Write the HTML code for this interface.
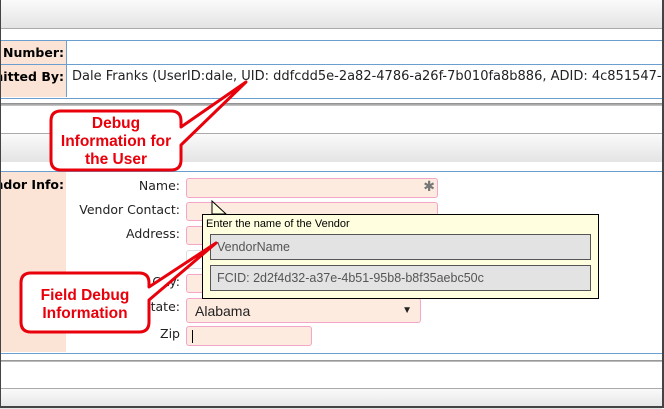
<!DOCTYPE html>
<html><head><style>
body{margin:0;width:664px;height:408px;overflow:hidden;background:#fff;font-family:"DejaVu Sans","Liberation Sans",sans-serif;position:relative}
.a{position:absolute}
.bar{background:linear-gradient(#fafafa,#e4e4e4);}
.lbl{font-size:12.5px;color:#222;text-align:right;width:180px;left:0}
.inp{background:#fdebdf;border:1px solid #f4a6c8;border-radius:3px;box-sizing:border-box}
.ar{font-family:"Liberation Sans",Arial,sans-serif}
.clip{position:absolute;left:0;width:65px;height:20px;overflow:hidden}
.clip span{position:absolute;right:1px;top:0;font-size:12.5px;font-weight:bold;white-space:nowrap}
</style></head><body>
<div class="a bar" style="left:0;top:0;width:662px;height:28px;border-bottom:1px solid #aaa"></div>
<div class="a" style="left:0;top:40px;width:662px;height:57px;border-top:1px solid #6a9fd0;border-bottom:1px solid #6a9fd0"></div>
<div class="a" style="left:0;top:41px;width:66px;height:56px;background:#fbe3d6;border-right:1px solid #6a9fd0"></div>
<div class="a" style="left:0;top:64px;width:662px;height:1px;background:#6a9fd0"></div>
<div class="clip" style="top:45px"><span>Vendor Number:</span></div>
<div class="clip" style="top:69px"><span>Submitted By:</span></div>
<div class="a" style="left:72px;top:69px;font-size:13px;white-space:nowrap;color:#222">Dale Franks (UserID:dale, UID: ddfcdd5e-2a82-4786-a26f-7b010fa8b886, ADID: 4c851547-f4</div>
<div class="a" style="left:0;top:103px;width:662px;height:3px;background:linear-gradient(#888,#ccc)"></div>
<div class="a bar" style="left:0;top:133px;width:662px;height:28px;border-top:1px solid #aaa"></div>
<div class="a" style="left:0;top:171px;width:662px;height:181px;border-top:1px solid #6a9fd0;border-bottom:1px solid #6a9fd0"></div>
<div class="a" style="left:0;top:172px;width:66px;height:180px;background:#fbe3d6"></div>
<div class="clip" style="top:177px"><span>Vendor Info:</span></div>
<div class="a lbl" style="top:178px;">Name:</div>
<div class="a lbl" style="top:202px;">Vendor Contact:</div>
<div class="a lbl" style="top:226px;">Address:</div>
<div class="a lbl" style="top:274px;">City:</div>
<div class="a lbl" style="top:299px;">State:</div>
<div class="a lbl" style="top:326px;">Zip</div>
<div class="a inp" style="left:186px;top:178px;width:252px;height:20px"><span class="a" style="right:2px;top:0px;color:#777;font-size:14px;font-weight:bold">✱</span></div>
<div class="a inp" style="left:186px;top:202px;width:252px;height:19px"></div>
<div class="a inp" style="left:186px;top:226px;width:252px;height:19px"></div>
<div class="a" style="left:186px;top:250px;width:252px;height:19px;border:1px solid #ddd;border-radius:3px;box-sizing:border-box"></div>
<div class="a inp" style="left:186px;top:274px;width:252px;height:19px"></div>
<div class="a inp ar" style="left:186px;top:298px;width:235px;height:25px;font-size:14px;padding:4px 8px;color:#222">Alabama<span class="a" style="right:8px;top:6px;font-size:10px">▼</span></div>
<div class="a inp" style="left:186px;top:326px;width:126px;height:20px"><div class="a" style="left:5px;top:3px;width:1px;height:13px;background:#000"></div></div>
<div class="a" style="left:0;top:360px;width:662px;height:2px;background:linear-gradient(#888,#ccc)"></div>
<div class="a bar" style="left:0;top:388px;width:662px;height:20px;border-top:1px solid #aaa"></div>
<div class="a" style="left:662px;top:0;width:2px;height:408px;background:#444"></div>
<div class="a" style="left:0;top:0;width:1px;height:408px;background:#444"></div>
<div class="a" style="left:0;top:406px;width:664px;height:2px;background:#444"></div>
<div class="a ar" style="left:202px;top:214px;width:397px;height:85px;background:#ffffe0;border:1px solid #000;box-sizing:border-box">
<div class="a" style="left:3px;top:3px;font-size:11px">Enter the name of the Vendor</div>
<div class="a" style="left:7px;top:19px;width:381px;height:26px;background:#e3e3e3;border:1px solid #555;box-sizing:border-box;font-size:12.5px;color:#555;padding:5px 6px">VendorName</div>
<div class="a" style="left:7px;top:50px;width:381px;height:26px;background:#e3e3e3;border:1px solid #555;box-sizing:border-box;font-size:12.5px;color:#555;padding:5px 6px">FCID: 2d2f4d32-a37e-4b51-95b8-b8f35aebc50c</div>
</div>
<svg class="a" style="left:0;top:0" width="664" height="408">
<path d="M212 201 L226 214 L212 214 Z" fill="#ffffe0" stroke="#000"/>
<path d="M61 111 H171 Q181 111 181 121 V127 L246 82 L181 145 V160 Q181 170 171 170 H61 Q51 170 51 160 V121 Q51 111 61 111 Z" fill="#fff" stroke="#e8000b" stroke-width="3" stroke-linejoin="round"/>
<path d="M31 273 H139 Q149 273 149 283 V287 L216 243 L149 300 V322 Q149 332 139 332 H31 Q21 332 21 322 V283 Q21 273 31 273 Z" fill="#fff" stroke="#e8000b" stroke-width="3" stroke-linejoin="round"/>
<g font-family="Liberation Sans,Arial,sans-serif" font-weight="bold" font-size="15.5" fill="#e8000b" text-anchor="middle">
<text x="116" y="128">Debug</text><text x="116" y="146">Information for</text><text x="116" y="164">the User</text>
<text x="85" y="300">Field Debug</text><text x="85" y="318">Information</text>
</g>
</svg>
</body></html>
